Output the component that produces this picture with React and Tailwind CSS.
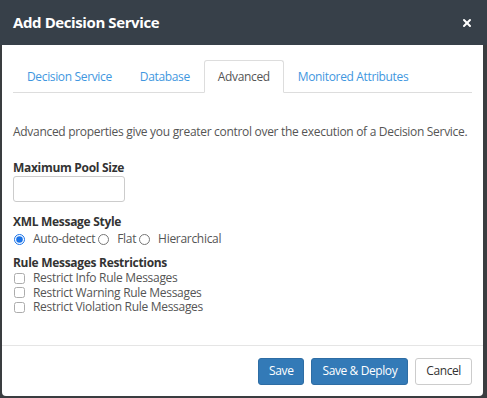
import React, { useState } from 'react';
import { X } from 'lucide-react';

const tabs = ['Decision Service', 'Database', 'Advanced', 'Monitored Attributes'];
const restrictions = ['Restrict Info Rule Messages', 'Restrict Warning Rule Messages', 'Restrict Violation Rule Messages'];

const App = () => {
    const [style, setStyle] = useState('auto');

    return (
        <div className="w-[487px] h-[398px] bg-[#3a3d40] pl-[2px] pr-[4px] pb-[2px] overflow-hidden" style={{ fontFamily: '"Open Sans", sans-serif' }}>
            <div className="h-full bg-white rounded-b-[4px] flex flex-col">
                {/* Header */}
                <div className="h-[45px] shrink-0 bg-[#374049] -ml-[2px] -mr-[4px] pl-[13px] pr-[14px] flex items-center justify-between">
                    <h1 className="text-[15px] font-bold text-white tracking-[-0.4px]">Add Decision Service</h1>
                    <X size={12} strokeWidth={4} className="text-white" />
                </div>

                {/* Body */}
                <div className="flex-1 px-[11px] pt-[15px]">
                    <div className="flex border-b border-[#dddddd] text-[12px] tracking-[-0.35px]">
                        {tabs.map((t) => (
                            <div
                                key={t}
                                className={`px-[13px] h-[33px] flex items-center -mb-px rounded-t-[3px] border ${t === 'Advanced' ? 'bg-white border-[#dddddd] border-b-white text-[#555555]' : 'border-transparent text-[#3f97e0]'}`}
                            >
                                {t}
                            </div>
                        ))}
                    </div>

                    <p className="mt-[30px] text-[12px] leading-[18px] text-[#555555] tracking-[-0.3px] whitespace-nowrap">
                        Advanced properties give you greater control over the execution of a Decision Service.
                    </p>

                    <div className="mt-[19px] text-[12px] leading-[16px] font-bold text-[#333333] tracking-[-0.3px]">Maximum Pool Size</div>
                    <input className="w-[112px] h-[26px] border border-[#cccccc] rounded-[3px] block" />

                    <div className="mt-[12px] text-[12px] leading-[16px] font-bold text-[#333333] tracking-[-0.3px]">XML Message Style</div>
                    <div className="mt-[1px] flex items-center text-[12px] text-[#555555] leading-[16px] tracking-[-0.3px]">
                        {[['auto', 'Auto-detect'], ['flat', 'Flat'], ['hier', 'Hierarchical']].map(([k, label]) => (
                            <label key={k} className="flex items-center">
                                <input
                                    type="radio"
                                    name="xmlstyle"
                                    checked={style === k}
                                    onChange={() => setStyle(k)}
                                    className="w-[11px] h-[11px] m-0 ml-[1px] mr-[8px] accent-[#1a73e8]"
                                />
                                <span className="mr-[2px]">{label}</span>
                            </label>
                        ))}
                    </div>

                    <div className="mt-[8px] text-[12px] leading-[16px] font-bold text-[#333333] tracking-[-0.3px]">Rule Messages Restrictions</div>
                    <div className="flex flex-col text-[12px] text-[#555555] leading-[14.5px] tracking-[-0.3px]">
                        {restrictions.map((r) => (
                            <label key={r} className="flex items-center">
                                <input type="checkbox" className="w-[11px] h-[11px] m-0 ml-[1px] mr-[8px] opacity-60" />
                                <span>{r}</span>
                            </label>
                        ))}
                    </div>
                </div>

                {/* Footer */}
                <div className="border-t border-[#e5e5e5] h-[51px] shrink-0 px-[11px] flex items-center justify-end gap-[7px] text-[12px] tracking-[-0.4px]">
                    <button className="h-[27px] px-[10px] rounded-[3px] bg-[#337ab7] border border-[#2e6da4] text-white">Save</button>
                    <button className="h-[27px] px-[10px] rounded-[3px] bg-[#337ab7] border border-[#2e6da4] text-white">Save &amp; Deploy</button>
                    <button className="h-[27px] px-[10px] rounded-[3px] bg-white border border-[#cccccc] text-[#333333]">Cancel</button>
                </div>
            </div>
        </div>
    );
};

export default App;
